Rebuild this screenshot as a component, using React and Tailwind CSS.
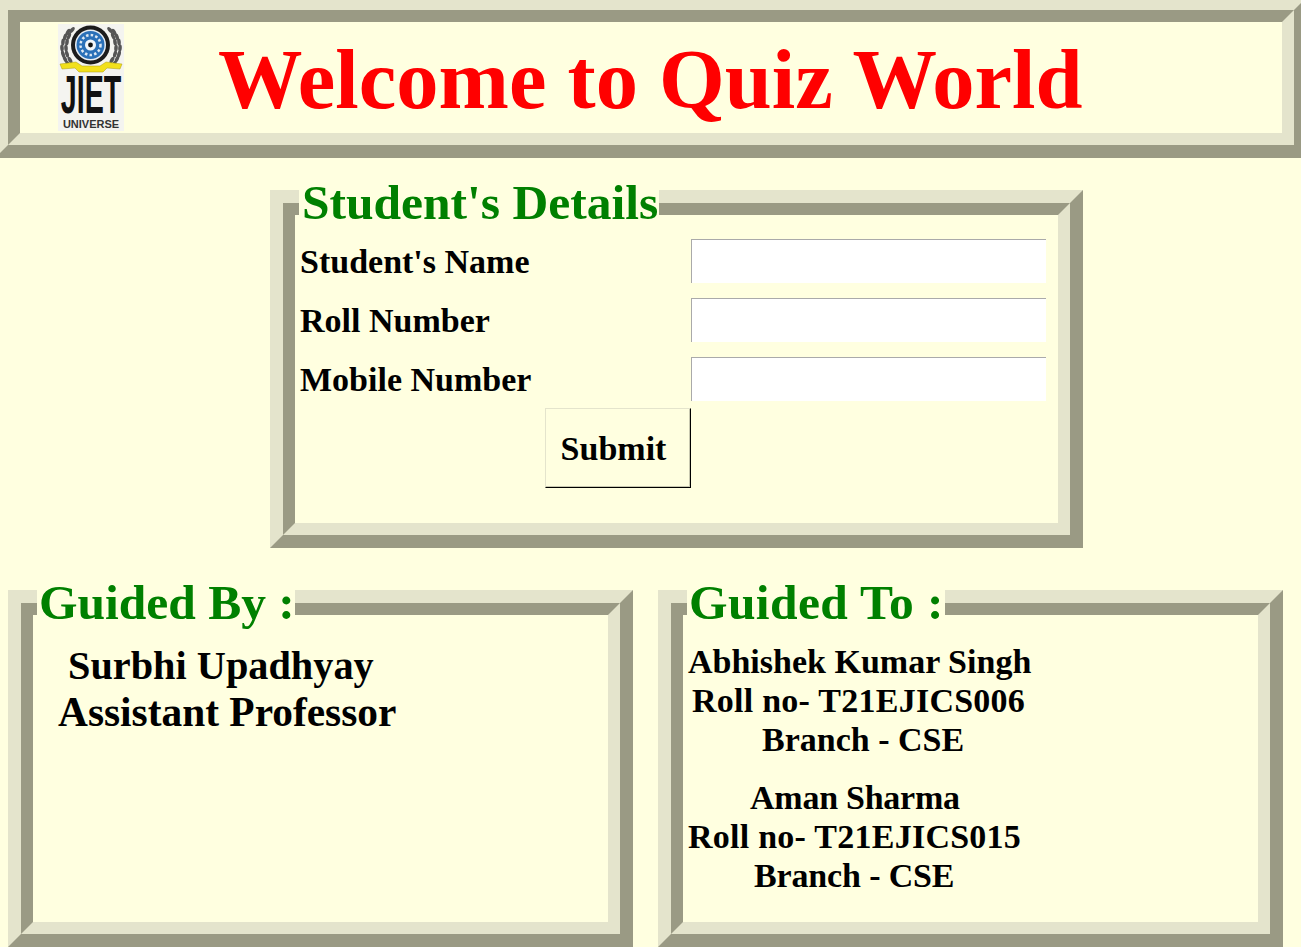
import React from "react";

// ridge frame, two nested boxes so both tones can be set
const outer = "border-[13px] border-t-[#e4e4cc] border-l-[#e4e4cc] border-r-[#9a9a84] border-b-[#9a9a84]";
const inner = "border-[12px] border-t-[#9a9a84] border-l-[#9a9a84] border-r-[#e4e4cc] border-b-[#e4e4cc]";

const leaves = [
  [10, 8, 30], [7, 13, 15], [5, 18, 5], [4, 24, -5], [5, 30, -15], [7, 35, -25], [10, 40, -35],
  [14, 6, 40], [11, 12, 20], [9, 18, 8], [8, 24, -3], [9, 30, -15], [12, 36, -30],
];

function Logo() {
  return (
    <div className="w-[66px] h-[107px] bg-[#f4f4f0] flex flex-col items-center shrink-0 overflow-hidden">
      <svg width="66" height="50" viewBox="0 0 66 50" className="shrink-0">
        {leaves.map(([x, y, r], i) => (
          <g key={i} fill="#555">
            <ellipse cx={x} cy={y} rx="1.8" ry="3.6" transform={`rotate(${r} ${x} ${y})`} />
            <ellipse cx={66 - x} cy={y} rx="1.8" ry="3.6" transform={`rotate(${-r} ${66 - x} ${y})`} />
          </g>
        ))}
        <circle cx="32.5" cy="21" r="19.5" fill="#1c1c1c" />
        <circle cx="32.5" cy="21" r="15.5" fill="#e8eef4" />
        <circle cx="32.5" cy="21" r="14" fill="#2a70b8" />
        <circle cx="32.5" cy="21" r="10" fill="none" stroke="#dfe9f3" strokeWidth="2.5" strokeDasharray="2.5 2.2" />
        <circle cx="32.5" cy="21" r="5.5" fill="#f2f6fa" />
        <circle cx="32.5" cy="21" r="2.4" fill="#111" />
        <path d="M2 40L18 38L24 42L42 42L48 38L64 40L62 45L49 44L45 48L21 48L17 44L4 45Z" fill="#f2e01c" stroke="#a89a10" strokeWidth="0.5" />
      </svg>
      <div className="font-['Liberation_Sans',sans-serif] font-bold text-[#111] text-[54px] leading-[40px] whitespace-nowrap scale-x-[0.53] shrink-0">JIET</div>
      <div className="font-['Liberation_Sans',sans-serif] font-bold text-[#333] text-[11px] leading-[12px] mt-[4px] shrink-0">UNIVERSE</div>
    </div>
  );
}

function Row({ label }) {
  return (
    <div className="flex items-center h-[44px] mb-[15px]">
      <label className="w-[396px] pl-[5px] pt-[2px] text-[34px] leading-none font-bold text-black">{label}</label>
      <input className="w-[355px] h-[44px] bg-white border-t border-l border-[#aaaaaa] outline-none" />
    </div>
  );
}

function Panel({ title, className, legendClass, children }) {
  return (
    <div className={`relative ${outer} ${className}`}>
      <div className={`h-full ${inner}`}>{children}</div>
      <div className={`absolute -top-[23px] h-[48px] bg-[#ffffe0] text-[49.5px] leading-[46px] font-bold text-[#008000] whitespace-nowrap ${legendClass}`}>
        {title}
      </div>
    </div>
  );
}

export default function App() {
  return (
    <div className="w-[1301px] h-[947px] overflow-hidden bg-[#ffffe0] font-['Liberation_Serif',serif]">
      <header className={`${outer} w-[1312px] h-[161px] -ml-[5px] -mt-[3px]`}>
        <div className={`${inner} h-full flex items-center pl-[38px]`}>
          <Logo />
          <h1 className="ml-[94px] pt-[5px] text-[84.5px] leading-none font-bold text-[#ff0000] whitespace-nowrap">Welcome to Quiz World</h1>
        </div>
      </header>

      <div className="flex pl-[270px] mt-[32px]">
        <Panel title="Student's Details" className="w-[813px] h-[358px]" legendClass="left-[16px] w-[360px] pl-[3px]">
          <div className="pt-[24px]">
            <Row label="Student's Name" />
            <Row label="Roll Number" />
            <Row label="Mobile Number" />
            <div className="pl-[250px] -mt-[8px]">
              <button className="w-[146px] h-[80px] pr-[9px] text-[34px] font-bold text-black bg-[#ffffe0] border border-[#e4e4cc] border-r-black border-b-black shadow-[inset_-1px_-1px_0_#c8c8b0]">Submit</button>
            </div>
          </div>
        </Panel>
      </div>

      <div className="flex gap-[25px] pl-[8px] mt-[42px]">
        <Panel title="Guided By :" className="w-[625px] h-[357px]" legendClass="left-[16px] w-[258px] pl-[2px]">
          <div className="leading-[46px] font-bold text-black pt-[28px]">
            <div className="pl-[35px] text-[40.3px]">Surbhi Upadhyay</div>
            <div className="pl-[25px] text-[41.4px]">Assistant Professor</div>
          </div>
        </Panel>
        <Panel title="Guided To :" className="w-[625px] h-[357px]" legendClass="left-[16px] w-[258px] pl-[2px] tracking-[0.4px]">
          <div className="text-[34px] leading-[39px] font-bold text-black pt-[27px]">
            <div className="pl-[5px]">Abhishek Kumar Singh</div>
            <div className="pl-[9px] tracking-[0.25px]">Roll no- T21EJICS006</div>
            <div className="pl-[79px]">Branch - CSE</div>
            <div className="pl-[67px] mt-[19px] tracking-[-0.25px]">Aman Sharma</div>
            <div className="pl-[5px] tracking-[0.25px]">Roll no- T21EJICS015</div>
            <div className="pl-[71px] tracking-[-0.15px]">Branch - CSE</div>
          </div>
        </Panel>
      </div>
    </div>
  );
}
